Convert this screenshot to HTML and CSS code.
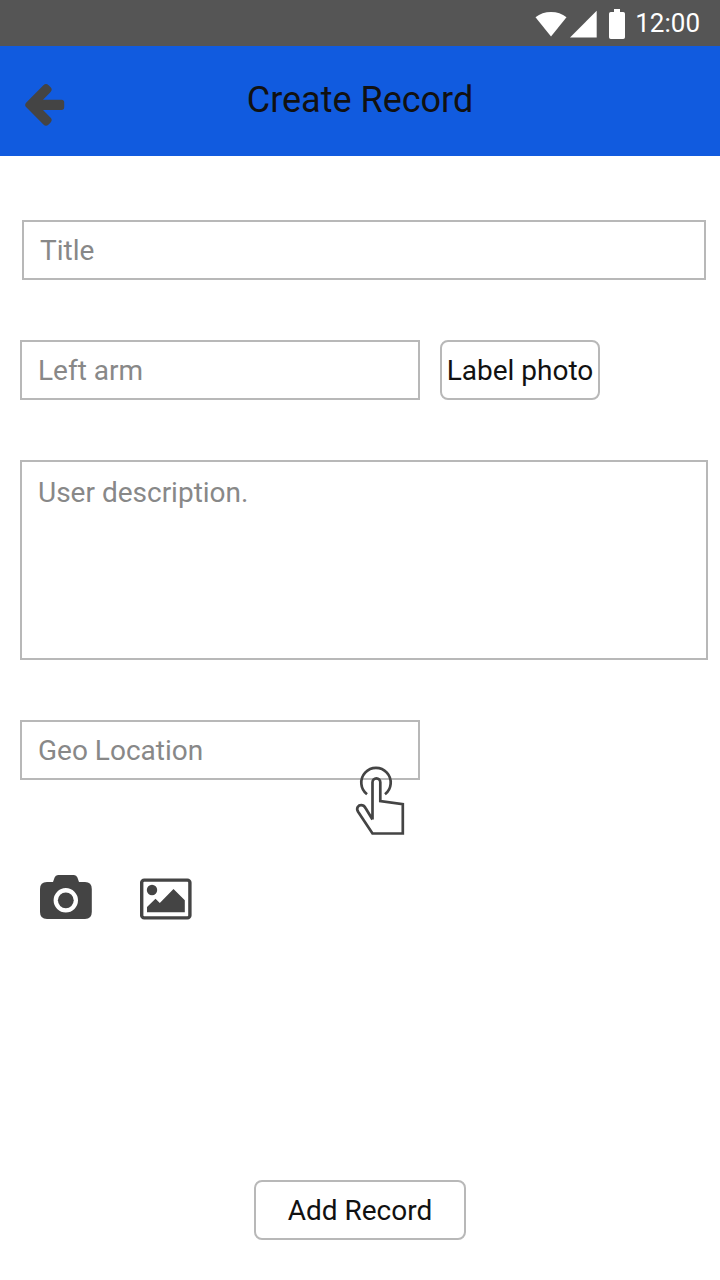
FILE: index.html
```html
<!DOCTYPE html>
<html lang="en">
<head>
<meta charset="utf-8">
<title>Create Record</title>
<link rel="stylesheet" href="styles.css">
</head>
<body>
<div class="screen">
  <div class="status-bar">
    <svg class="status-icons" viewBox="530 0 100 46" aria-hidden="true">
      <path d="M535.5 17.3Q542 12.1 551 12.1T566.5 17.3L551 36.5Z"/>
      <path d="M596.7 10.7V37.5H570Z"/>
      <path d="M614 9h6v3h3.200q1.800 0 1.800 1.800v23.400q0 1.800-1.800 1.800h-12.400q-1.800 0-1.800-1.800v-23.400q0-1.800 1.800-1.800h3.200z"/>
    </svg>
    <span class="clock">12:00</span>
  </div>
  <header class="app-bar">
    <button class="back" type="button" aria-label="Back">
      <svg class="back-icon" viewBox="24 82 42 45"><path d="M26.300 102.500L43.400 85.200Q46 82.600 48.600 85.200L50.400 87Q53 89.600 50.400 92.200L43 99.700H61.500Q64.200 99.700 64.200 102.500V107.300Q64.200 110 61.500 110H43L50.400 117.500Q53 120.100 50.400 122.700L48.600 124.500Q46 127.100 43.400 124.500L26.300 107.200Q24 104.900 26.300 102.500Z"/></svg>
    </button>
    <h1 class="heading">Create Record</h1>
  </header>
  <main class="form">
    <div class="field field-title">Title</div>
    <div class="row">
      <div class="field field-short">Left arm</div>
      <button class="button button-label" type="button">Label photo</button>
    </div>
    <div class="field field-description">User description.</div>
    <div class="field field-short">Geo Location
      <svg class="pointer" viewBox="354 764 54 74" aria-hidden="true">
        <path d="M367 794.200A14.700 14.700 0 1 1 385 794.200"/>
        <path d="M372.500 819.500V782.200A3.900 3.900 0 0 1 380.300 782.200V801L402.800 804.200V833.500H372.500L358.100 811.700C355.700 807.700 358.500 805.200 361.200 805.200C363.500 805.200 364.500 806.200 365.500 808L372.500 819.500"/>
      </svg>
    </div>
    <div class="attachments">
      <svg class="attachment" viewBox="40 873 52 48" role="img" aria-label="Camera">
        <path fill-rule="evenodd" d="M47 882H53L54.600 877.500Q55.500 875 58 875H74Q76.500 875 77.400 877.500L79 882H85Q91.800 882 91.800 889V912Q91.800 919 85 919H47Q40 919 40 912V889Q40 882 47 882ZM53.600 900.300A12.200 12.200 0 1 0 78 900.300A12.200 12.200 0 1 0 53.600 900.300Z"/>
        <circle cx="65.800" cy="900.300" r="7.900"/>
      </svg>
      <svg class="attachment" viewBox="140 873 52 48" role="img" aria-label="Gallery">
        <rect class="frame" x="141.700" y="880.100" width="48.200" height="37.800" rx="2.500"/>
        <circle cx="152" cy="890" r="5.200"/>
        <path d="M147 912.300V907L155.500 898.700L159.800 903L173.500 889.100L184.800 900.300V912.300Z"/>
      </svg>
    </div>
    <button class="button button-add" type="button">Add Record</button>
  </main>
</div>
</body>
</html>
```
FILE: styles.css
```css
* { box-sizing: border-box; }
body { margin: 0; background: #fff; font-family: Roboto, sans-serif; }
.screen { width: 720px; height: 1280px; display: flex; flex-direction: column; }
.status-bar {
  height: 46px; flex: none; display: flex; justify-content: flex-end; align-items: center;
  gap: 5px; padding-right: 20px; background: #555; color: #fff;
}
.status-icons { width: 100px; height: 46px; fill: #fff; }
.clock { font-size: 26px; line-height: 46px; }
.app-bar {
  height: 110px; flex: none; display: grid; grid-template-columns: 66px 1fr 66px;
  background: #115bdf;
}
.back { border: 0; padding: 36px 0 0 24px; background: none; display: flex; }
.back-icon { width: 42px; height: 45px; flex: none; fill: #444; }
.heading { margin: 0; font-size: 36px; font-weight: 400; line-height: 108px; text-align: center; color: #111; }
.form {
  flex: 1; display: flex; flex-direction: column; align-items: flex-start;
  gap: 60px; padding: 64px 12px 40px 20px;
}
.row { display: flex; gap: 20px; }
.field {
  height: 60px; border: 2px solid #b8b8b8; padding: 0 16px;
  font-size: 28px; line-height: 58px; color: #888; position: relative;
}
.field-title { width: 684px; margin-left: 2px; }
.field-short { width: 400px; }
.field-description { width: 688px; height: 200px; padding-top: 2px; }
.pointer {
  position: absolute; left: 332px; top: 42px; width: 54px; height: 74px;
  fill: none; stroke: #444; stroke-width: 2.7;
}
.attachments { display: flex; gap: 48px; margin: 33px 0 0 20px; }
.attachment { width: 52px; height: 48px; fill: #444; }
.frame { fill: none; stroke: #444; stroke-width: 3.4; }
.button {
  height: 60px; padding: 2px 0 0; border: 2px solid #b8b8b8; border-radius: 8px; background: #fff;
  font-family: inherit; font-size: 28px; line-height: 54px; color: #111; white-space: nowrap;
}
.button-label { width: 160px; }
.button-add { width: 212px; margin: auto 0 0 234px; }
```
